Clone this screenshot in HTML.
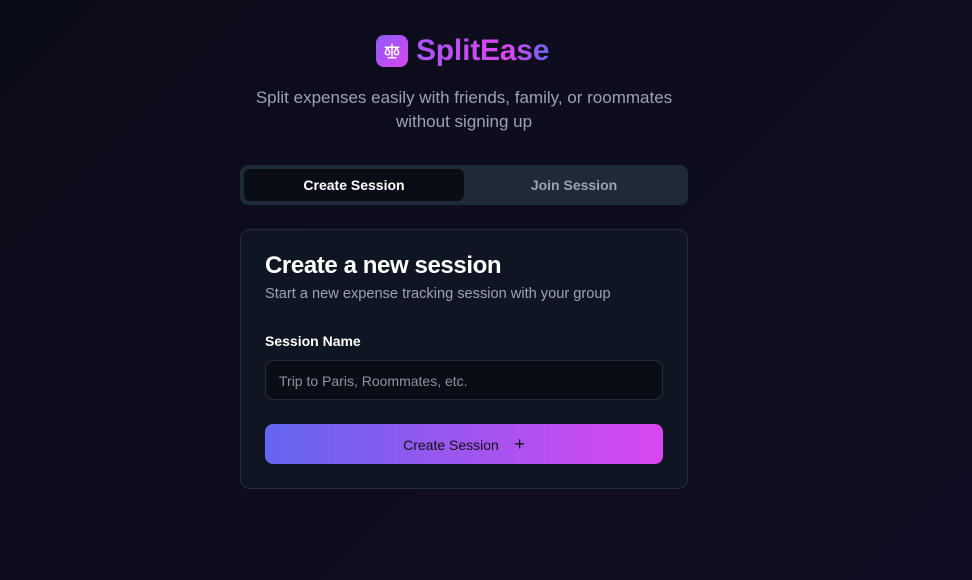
<!DOCTYPE html>
<html><head><style>
*{margin:0;padding:0;box-sizing:border-box}
body{width:972px;height:580px;overflow:hidden;background:linear-gradient(135deg,#0b0c1a 0%,#0e0d1e 50%,#120d22 100%);font-family:"Liberation Sans",sans-serif;position:relative}
.logo{position:absolute;left:376px;top:35px;width:32px;height:32px;border-radius:8px;background:linear-gradient(135deg,#8b5cf6,#d946ef);display:flex;align-items:center;justify-content:center}
.title{position:absolute;left:416px;top:34px;font-size:30px;font-weight:bold;background:linear-gradient(90deg,#a855f7 0%,#d946ef 70%,#6366f1 100%);-webkit-background-clip:text;color:transparent;letter-spacing:-0.2px}
.sub{position:absolute;left:0;width:928px;top:86px;text-align:center;color:#9aa3b5;font-size:17px;line-height:24px}
.tabs{position:absolute;left:240px;top:165px;width:448px;height:40px;background:#1f2937;border-radius:8px}
.tab1{position:absolute;left:4px;top:4px;width:220px;height:32px;background:#0a0d16;border-radius:6px;color:#fff;font-size:14px;font-weight:bold;text-align:center;line-height:32px}
.tab2{position:absolute;left:224px;top:4px;width:220px;height:32px;color:#9ca3af;font-size:14px;font-weight:bold;text-align:center;line-height:32px}
.card{position:absolute;left:240px;top:229px;width:448px;height:260px;background:#0f1522;border:1px solid #252c3a;border-radius:10px}
h2{position:absolute;left:24px;top:22px;color:#fff;font-size:24px;font-weight:bold;letter-spacing:-0.4px}
.desc{position:absolute;left:24px;top:56px;color:#9aa3b5;font-size:14.6px}
.lab{position:absolute;left:24px;top:103px;color:#fff;font-size:14px;font-weight:bold}
.inp{position:absolute;left:24px;top:130px;width:398px;height:40px;background:#0a0d16;border:1px solid #252c3a;border-radius:8px;color:#8b93a5;font-size:14px;line-height:40px;padding-left:13px}
.btn{position:absolute;left:24px;top:194px;width:398px;height:40px;border-radius:8px;background:linear-gradient(90deg,#6366f1,#d946ef);color:#111;font-size:14px;text-align:center;line-height:40px}
</style></head><body>
<div class="logo"><svg width="18" height="18" viewBox="0 0 24 24" fill="none" stroke="#fff" stroke-width="2" stroke-linecap="round" stroke-linejoin="round"><path d="M12 3v17M7 21h10M3 7h18M6 7l-3 7a3 3 0 0 0 6 0zM18 7l-3 7a3 3 0 0 0 6 0z"/></svg></div>
<div class="title">SplitEase</div>
<div class="sub">Split expenses easily with friends, family, or roommates<br>without signing up</div>
<div class="tabs"><div class="tab1">Create Session</div><div class="tab2">Join Session</div></div>
<div class="card">
<h2>Create a new session</h2>
<div class="desc">Start a new expense tracking session with your group</div>
<div class="lab">Session Name</div>
<div class="inp">Trip to Paris, Roommates, etc.</div>
<div class="btn">Create Session &nbsp;&nbsp; <span style="font-size:18px">+</span></div>
</div>
</body></html>
